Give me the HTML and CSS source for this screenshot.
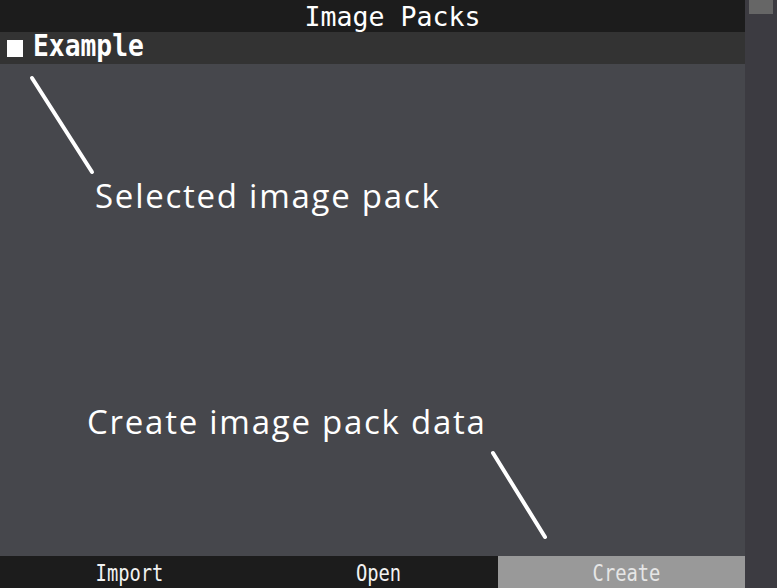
FILE: index.html
```html
<!DOCTYPE html>
<html>
<head>
<meta charset="utf-8">
<link rel="stylesheet" href="styles.css">
</head>
<body>
<div class="app">
  <div class="main">
    <div class="titlebar"><span class="title">Image Packs</span></div>
    <div class="pack-row selected"><span class="marker"></span><span class="pack-name">Example</span></div>
    <div class="content">
      <svg class="pointer pointer-top" width="70" height="104" viewBox="0 0 70 104"><line x1="5" y1="5" x2="65" y2="99" /></svg>
      <div class="note note-top">Selected image pack</div>
      <div class="note note-bottom">Create image pack data</div>
      <svg class="pointer pointer-bottom" width="62" height="94" viewBox="0 0 62 94"><line x1="5" y1="5" x2="57" y2="89" /></svg>
    </div>
    <div class="actions">
      <div class="action"><span class="label">Import</span></div>
      <div class="action"><span class="label">Open</span></div>
      <div class="action primary"><span class="label">Create</span></div>
    </div>
  </div>
  <div class="scrollbar"><div class="thumb"></div></div>
</div>
</body>
</html>
```

FILE: styles.css
```css
html, body {
  margin: 0;
  padding: 0;
  background: #3c3b41;
}
.app {
  display: flex;
  width: 777px;
  height: 588px;
  overflow: hidden;
}
.main {
  width: 745px;
  display: flex;
  flex-direction: column;
  background: #46474c;
}
.titlebar {
  height: 32px;
  background: #1c1c1c;
  display: flex;
  justify-content: center;
  align-items: center;
}
.title {
  font-family: "DejaVu Sans Mono", monospace;
  font-size: 26.6px;
  line-height: 31px;
  color: #ffffff;
  display: inline-block;
  transform: scaleY(1.03);
  margin-left: 40px;
}
.pack-row {
  height: 32px;
  background: #333333;
  display: flex;
  align-items: center;
  padding-left: 7px;
  gap: 10px;
}
.marker {
  width: 16px;
  height: 17px;
  background: #ffffff;
}
.pack-name {
  font-family: "DejaVu Sans Mono", monospace;
  font-weight: bold;
  font-size: 26.3px;
  line-height: 24px;
  color: #ffffff;
  display: inline-block;
  transform: translateY(-2px) scaleY(1.15);
}
.content {
  flex: 1;
  position: relative;
}
.pointer {
  position: absolute;
}
.pointer line {
  stroke: #ffffff;
  stroke-width: 4;
  stroke-linecap: round;
}
.pointer-top {
  left: 27px;
  top: 9px;
}
.pointer-bottom {
  left: 488px;
  top: 384px;
}
.note {
  position: absolute;
  font-family: "Open Sans", "Noto Sans", sans-serif;
  font-size: 33px;
  letter-spacing: 1.75px;
  color: #ffffff;
  white-space: nowrap;
  line-height: 1;
}
.note-top {
  left: 95px;
  top: 115px;
}
.note-bottom {
  left: 87px;
  top: 341px;
}
.actions {
  height: 32px;
  display: grid;
  grid-template-columns: 249px 249px 247px;
  background: #1c1c1c;
}
.action {
  display: flex;
  justify-content: center;
  align-items: center;
  padding-left: 10px;
}
.action .label {
  font-family: "DejaVu Sans Mono", monospace;
  font-size: 18.8px;
  line-height: 20px;
  color: #f2f2f2;
  display: inline-block;
  transform: translateY(1px) scaleY(1.25);
}
.action.primary {
  background: #999999;
  box-shadow: 2px 0 0 #666666;
}
.action.primary .label {
  color: #e6e6e6;
}
.scrollbar {
  width: 32px;
  background: #3c3b41;
  display: flex;
  justify-content: center;
}
.thumb {
  width: 24px;
  height: 14px;
  background: #666666;
}
```
